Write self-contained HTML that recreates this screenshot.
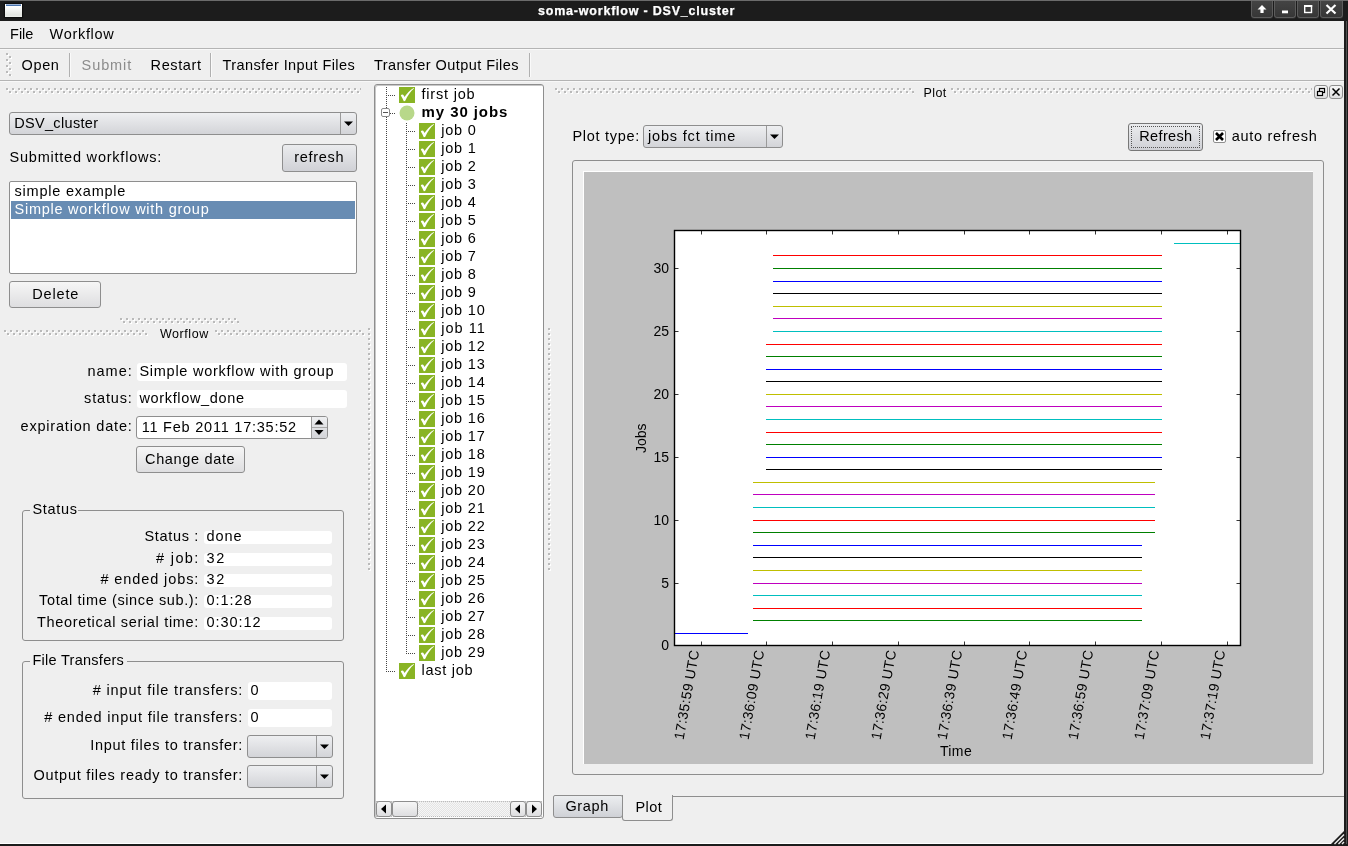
<!DOCTYPE html><html><head><meta charset="utf-8"><style>
html,body{margin:0;padding:0;}
body{width:1348px;height:846px;position:relative;overflow:hidden;background:#efefef;font-family:"Liberation Sans", sans-serif;}
.t{position:absolute;white-space:nowrap;font-family:"Liberation Sans", sans-serif;}
#txt{position:absolute;left:0;top:0;width:1348px;height:846px;will-change:transform;}
svg text{font-family:"Liberation Sans", sans-serif;}
</style></head><body>
<div id="txt"><div style="position:absolute;left:0px;top:0px;width:1348px;height:21px;box-sizing:border-box;background:#1c1c1c;"></div><div style="position:absolute;left:0px;top:0px;width:1348px;height:1px;box-sizing:border-box;background:#6b6b6b;"></div><div style="position:absolute;left:5px;top:4px;width:17px;height:13px;box-sizing:border-box;background:linear-gradient(#ffffff 20%,#e4e6e2 85%,#eef0ec);box-shadow:0 0 1px 1px rgba(0,0,0,0.5);"></div><div style="position:absolute;left:6px;top:4px;width:15px;height:1px;box-sizing:border-box;background:#9cb4d6;"></div><div style="position:absolute;left:6px;top:5px;width:15px;height:1px;box-sizing:border-box;background:#4c76b0;"></div><div class="t" style="left:538.00px;top:5.00px;font-size:12.5px;line-height:12.5px;letter-spacing:0.793px;color:#ffffff;font-weight:bold;-webkit-text-stroke:0.25px #fff;">soma-workflow - DSV_cluster</div><div style="position:absolute;left:1251px;top:1px;width:22px;height:17px;box-sizing:border-box;background:linear-gradient(#444,#363636);border:1px solid #5c5c5c;border-top:none;border-radius:0 0 3px 3px;box-shadow:0 1px 0 #2a2a2a;"></div><div style="position:absolute;left:1274px;top:1px;width:22px;height:17px;box-sizing:border-box;background:linear-gradient(#444,#363636);border:1px solid #5c5c5c;border-top:none;border-radius:0 0 3px 3px;box-shadow:0 1px 0 #2a2a2a;"></div><div style="position:absolute;left:1297px;top:1px;width:22px;height:17px;box-sizing:border-box;background:linear-gradient(#444,#363636);border:1px solid #5c5c5c;border-top:none;border-radius:0 0 3px 3px;box-shadow:0 1px 0 #2a2a2a;"></div><div style="position:absolute;left:1320px;top:1px;width:23px;height:17px;box-sizing:border-box;background:linear-gradient(#444,#363636);border:1px solid #5c5c5c;border-top:none;border-radius:0 0 3px 3px;box-shadow:0 1px 0 #2a2a2a;"></div><div style="position:absolute;left:1344px;top:21px;width:4px;height:825px;box-sizing:border-box;background:#1c1c1c;"></div><div style="position:absolute;left:0px;top:844px;width:1348px;height:2px;box-sizing:border-box;background:#1c1c1c;"></div><div style="position:absolute;left:0px;top:843px;width:1344px;height:1px;box-sizing:border-box;background:#ffffff;"></div><div style="position:absolute;left:1346px;top:21px;width:1px;height:823px;box-sizing:border-box;background:#505050;"></div><div class="t" style="left:10.00px;top:27.00px;font-size:14.5px;line-height:14.5px;letter-spacing:0.021px;color:#000;">File</div><div class="t" style="left:49.50px;top:27.00px;font-size:14.5px;line-height:14.5px;letter-spacing:0.705px;color:#000;">Workflow</div><div style="position:absolute;left:0px;top:48px;width:1344px;height:1px;box-sizing:border-box;background:#b4b4b4;"></div><div style="position:absolute;left:0px;top:49px;width:1344px;height:1px;box-sizing:border-box;background:#f8f8f8;"></div><div class="t" style="left:21.50px;top:58.00px;font-size:14.5px;line-height:14.5px;letter-spacing:0.642px;color:#000;">Open</div><div style="position:absolute;left:69px;top:53px;width:1px;height:24px;box-sizing:border-box;background:#b0b0b0;"></div><div style="position:absolute;left:70px;top:53px;width:1px;height:24px;box-sizing:border-box;background:#fafafa;"></div><div class="t" style="left:81.60px;top:58.00px;font-size:14.5px;line-height:14.5px;letter-spacing:0.907px;color:#8c8c8c;">Submit</div><div class="t" style="left:150.60px;top:58.00px;font-size:14.5px;line-height:14.5px;letter-spacing:0.598px;color:#000;">Restart</div><div style="position:absolute;left:210px;top:53px;width:1px;height:24px;box-sizing:border-box;background:#b0b0b0;"></div><div style="position:absolute;left:211px;top:53px;width:1px;height:24px;box-sizing:border-box;background:#fafafa;"></div><div class="t" style="left:222.50px;top:58.00px;font-size:14.5px;line-height:14.5px;letter-spacing:0.411px;color:#000;">Transfer Input Files</div><div class="t" style="left:374.00px;top:58.00px;font-size:14.5px;line-height:14.5px;letter-spacing:0.445px;color:#000;">Transfer Output Files</div><div style="position:absolute;left:529px;top:53px;width:1px;height:24px;box-sizing:border-box;background:#b0b0b0;"></div><div style="position:absolute;left:530px;top:53px;width:1px;height:24px;box-sizing:border-box;background:#fafafa;"></div><div style="position:absolute;left:0px;top:80px;width:1344px;height:1px;box-sizing:border-box;background:#b4b4b4;"></div><div style="position:absolute;left:0px;top:81px;width:1344px;height:1px;box-sizing:border-box;background:#f8f8f8;"></div><div style="position:absolute;left:9px;top:112px;width:348px;height:23px;box-sizing:border-box;border:1px solid #8e8e8e;border-radius:3px;background:linear-gradient(#eeeff1,#d3d4d8);"></div><div style="position:absolute;left:340px;top:113px;width:1px;height:21px;box-sizing:border-box;background:#9a9a9a;"></div><div class="t" style="left:14.20px;top:116.00px;font-size:14.5px;line-height:14.5px;letter-spacing:0.327px;color:#000;">DSV_cluster</div><div class="t" style="left:9.50px;top:150.00px;font-size:14.5px;line-height:14.5px;letter-spacing:0.781px;color:#000;">Submitted workflows:</div><div style="position:absolute;left:282px;top:144px;width:75px;height:28px;box-sizing:border-box;border:1px solid #8e8e8e;border-radius:3px;background:linear-gradient(#f6f6f6,#dedee0);background:linear-gradient(#ebecee,#d0d1d6);"></div><div class="t" style="left:294.30px;top:150.00px;font-size:14.5px;line-height:14.5px;letter-spacing:0.682px;color:#000;">refresh</div><div style="position:absolute;left:9px;top:181px;width:348px;height:93px;box-sizing:border-box;background:#fff;border:1px solid #8e8e8e;border-radius:2px;"></div><div style="position:absolute;left:11px;top:201px;width:344px;height:18px;box-sizing:border-box;background:#688cb3;"></div><div class="t" style="left:14.50px;top:184.00px;font-size:14.5px;line-height:14.5px;letter-spacing:0.784px;color:#000;">simple example</div><div class="t" style="left:14.50px;top:202.00px;font-size:14.5px;line-height:14.5px;letter-spacing:0.742px;color:#fff;">Simple workflow with group</div><div style="position:absolute;left:9px;top:281px;width:92px;height:27px;box-sizing:border-box;border:1px solid #8e8e8e;border-radius:3px;background:linear-gradient(#f6f6f6,#dedee0);"></div><div class="t" style="left:32.30px;top:287.00px;font-size:14.5px;line-height:14.5px;letter-spacing:0.818px;color:#000;">Delete</div><div class="t" style="left:160.00px;top:328.00px;font-size:12.5px;line-height:12.5px;letter-spacing:0.540px;color:#000;">Worflow</div><div class="t" style="left:87.42px;top:364.00px;font-size:14.5px;line-height:14.5px;letter-spacing:1.031px;color:#000;">name:</div><div style="position:absolute;left:137px;top:363px;width:210px;height:18px;box-sizing:border-box;background:#fff;border-radius:3px;"></div><div class="t" style="left:139.40px;top:364.00px;font-size:14.5px;line-height:14.5px;letter-spacing:0.742px;color:#000;">Simple workflow with group</div><div class="t" style="left:84.06px;top:391.00px;font-size:14.5px;line-height:14.5px;letter-spacing:0.837px;color:#000;">status:</div><div style="position:absolute;left:137px;top:390px;width:210px;height:18px;box-sizing:border-box;background:#fff;border-radius:3px;"></div><div class="t" style="left:139.40px;top:391.00px;font-size:14.5px;line-height:14.5px;letter-spacing:0.661px;color:#000;">workflow_done</div><div class="t" style="left:20.50px;top:419.00px;font-size:14.5px;line-height:14.5px;letter-spacing:0.812px;color:#000;">expiration date:</div><div style="position:absolute;left:136px;top:416px;width:192px;height:23px;box-sizing:border-box;background:#fff;border:1px solid #8e8e8e;border-radius:3px;"></div><div style="position:absolute;left:311px;top:417px;width:16px;height:21px;box-sizing:border-box;background:linear-gradient(#eeeff1,#d3d4d8);border-left:1px solid #9a9a9a;border-radius:0 2px 2px 0;"></div><div style="position:absolute;left:312px;top:427px;width:15px;height:1px;box-sizing:border-box;background:#a8a8a8;"></div><div class="t" style="left:141.70px;top:420.00px;font-size:14.5px;line-height:14.5px;letter-spacing:0.775px;color:#000;">11 Feb 2011 17:35:52</div><div style="position:absolute;left:136px;top:446px;width:109px;height:27px;box-sizing:border-box;border:1px solid #8e8e8e;border-radius:3px;background:linear-gradient(#f6f6f6,#dedee0);"></div><div class="t" style="left:145.00px;top:452.00px;font-size:14.5px;line-height:14.5px;letter-spacing:0.659px;color:#000;">Change date</div><div style="position:absolute;left:22px;top:510px;width:322px;height:131px;box-sizing:border-box;border:1px solid #8e8e8e;border-radius:3px;"></div><div style="position:absolute;left:30px;top:504px;width:48px;height:10px;box-sizing:border-box;background:#efefef;"></div><div class="t" style="left:32.40px;top:502.00px;font-size:14.5px;line-height:14.5px;letter-spacing:0.701px;color:#000;">Status</div><div class="t" style="left:144.54px;top:529.00px;font-size:14.5px;line-height:14.5px;letter-spacing:0.659px;color:#000;">Status :</div><div style="position:absolute;left:204px;top:531px;width:128px;height:13px;box-sizing:border-box;background:#fff;border-radius:3px;"></div><div class="t" style="left:206.50px;top:529.00px;font-size:14.5px;line-height:14.5px;letter-spacing:0.896px;color:#000;">done</div><div class="t" style="left:156.02px;top:551.00px;font-size:14.5px;line-height:14.5px;letter-spacing:1.354px;color:#000;"># job:</div><div style="position:absolute;left:204px;top:553px;width:128px;height:13px;box-sizing:border-box;background:#fff;border-radius:3px;"></div><div class="t" style="left:206.50px;top:551.00px;font-size:14.5px;line-height:14.5px;letter-spacing:1.688px;color:#000;">32</div><div class="t" style="left:100.44px;top:572.00px;font-size:14.5px;line-height:14.5px;letter-spacing:0.900px;color:#000;"># ended jobs:</div><div style="position:absolute;left:204px;top:574px;width:128px;height:13px;box-sizing:border-box;background:#fff;border-radius:3px;"></div><div class="t" style="left:206.50px;top:572.00px;font-size:14.5px;line-height:14.5px;letter-spacing:1.688px;color:#000;">32</div><div class="t" style="left:39.12px;top:593.00px;font-size:14.5px;line-height:14.5px;letter-spacing:0.615px;color:#000;">Total time (since sub.):</div><div style="position:absolute;left:204px;top:595px;width:128px;height:13px;box-sizing:border-box;background:#fff;border-radius:3px;"></div><div class="t" style="left:206.50px;top:593.00px;font-size:14.5px;line-height:14.5px;letter-spacing:0.950px;color:#000;">0:1:28</div><div class="t" style="left:36.88px;top:615.00px;font-size:14.5px;line-height:14.5px;letter-spacing:0.679px;color:#000;">Theoretical serial time:</div><div style="position:absolute;left:204px;top:617px;width:128px;height:13px;box-sizing:border-box;background:#fff;border-radius:3px;"></div><div class="t" style="left:206.50px;top:615.00px;font-size:14.5px;line-height:14.5px;letter-spacing:0.933px;color:#000;">0:30:12</div><div style="position:absolute;left:22px;top:661px;width:322px;height:138px;box-sizing:border-box;border:1px solid #8e8e8e;border-radius:3px;"></div><div style="position:absolute;left:30px;top:655px;width:97px;height:10px;box-sizing:border-box;background:#efefef;"></div><div class="t" style="left:32.40px;top:653.00px;font-size:14.5px;line-height:14.5px;letter-spacing:0.280px;color:#000;">File Transfers</div><div class="t" style="left:92.64px;top:683.00px;font-size:14.5px;line-height:14.5px;letter-spacing:0.871px;color:#000;"># input file transfers:</div><div style="position:absolute;left:248px;top:682px;width:84px;height:18px;box-sizing:border-box;background:#fff;border-radius:3px;"></div><div class="t" style="left:250.50px;top:683.00px;font-size:14.5px;line-height:14.5px;letter-spacing:0.844px;color:#000;">0</div><div class="t" style="left:44.20px;top:710.00px;font-size:14.5px;line-height:14.5px;letter-spacing:0.826px;color:#000;"># ended input file transfers:</div><div style="position:absolute;left:248px;top:709px;width:84px;height:18px;box-sizing:border-box;background:#fff;border-radius:3px;"></div><div class="t" style="left:250.50px;top:710.00px;font-size:14.5px;line-height:14.5px;letter-spacing:0.844px;color:#000;">0</div><div class="t" style="left:90.26px;top:738.00px;font-size:14.5px;line-height:14.5px;letter-spacing:0.723px;color:#000;">Input files to transfer:</div><div style="position:absolute;left:247px;top:735px;width:86px;height:23px;box-sizing:border-box;border:1px solid #8e8e8e;border-radius:3px;background:linear-gradient(#eeeff1,#d3d4d8);"></div><div style="position:absolute;left:316px;top:736px;width:1px;height:21px;box-sizing:border-box;background:#9a9a9a;"></div><div class="t" style="left:33.56px;top:768.00px;font-size:14.5px;line-height:14.5px;letter-spacing:0.724px;color:#000;">Output files ready to transfer:</div><div style="position:absolute;left:247px;top:765px;width:86px;height:23px;box-sizing:border-box;border:1px solid #8e8e8e;border-radius:3px;background:linear-gradient(#eeeff1,#d3d4d8);"></div><div style="position:absolute;left:316px;top:766px;width:1px;height:21px;box-sizing:border-box;background:#9a9a9a;"></div><div style="position:absolute;left:374px;top:84px;width:170px;height:735px;box-sizing:border-box;background:#fff;border:1px solid #8e8e8e;border-radius:3px;box-shadow:inset 1px 1px 0 #c8c8c8;"></div><div style="position:absolute;left:376px;top:801px;width:166px;height:16px;box-sizing:border-box;background:repeating-conic-gradient(#e4e4e4 0 25%,#f6f6f6 0 50%) 0 0/2px 2px;border-top:1px dotted #bbb;border-bottom:1px dotted #bbb;"></div><div style="position:absolute;left:376px;top:801px;width:16px;height:16px;box-sizing:border-box;border:1px solid #8e8e8e;border-radius:3px;background:linear-gradient(#f6f6f6,#dedee0);"></div><div style="position:absolute;left:392px;top:801px;width:26px;height:16px;box-sizing:border-box;border:1px solid #8e8e8e;border-radius:3px;background:linear-gradient(#f6f6f6,#dedee0);"></div><div style="position:absolute;left:510px;top:801px;width:16px;height:16px;box-sizing:border-box;border:1px solid #8e8e8e;border-radius:3px;background:linear-gradient(#f6f6f6,#dedee0);"></div><div style="position:absolute;left:526px;top:801px;width:16px;height:16px;box-sizing:border-box;border:1px solid #8e8e8e;border-radius:3px;background:linear-gradient(#f6f6f6,#dedee0);"></div><div class="t" style="left:421.50px;top:87.00px;font-size:14.5px;line-height:14.5px;letter-spacing:0.802px;color:#000;">first job</div><div class="t" style="left:421.60px;top:104.00px;font-size:15px;line-height:15px;letter-spacing:0.910px;color:#000;font-weight:bold;">my 30 jobs</div><div class="t" style="left:441.20px;top:123.00px;font-size:14.5px;line-height:14.5px;letter-spacing:0.815px;color:#000;">job 0</div><div class="t" style="left:441.20px;top:141.00px;font-size:14.5px;line-height:14.5px;letter-spacing:0.815px;color:#000;">job 1</div><div class="t" style="left:441.20px;top:159.00px;font-size:14.5px;line-height:14.5px;letter-spacing:0.815px;color:#000;">job 2</div><div class="t" style="left:441.20px;top:177.00px;font-size:14.5px;line-height:14.5px;letter-spacing:0.815px;color:#000;">job 3</div><div class="t" style="left:441.20px;top:195.00px;font-size:14.5px;line-height:14.5px;letter-spacing:0.815px;color:#000;">job 4</div><div class="t" style="left:441.20px;top:213.00px;font-size:14.5px;line-height:14.5px;letter-spacing:0.815px;color:#000;">job 5</div><div class="t" style="left:441.20px;top:231.00px;font-size:14.5px;line-height:14.5px;letter-spacing:0.815px;color:#000;">job 6</div><div class="t" style="left:441.20px;top:249.00px;font-size:14.5px;line-height:14.5px;letter-spacing:0.815px;color:#000;">job 7</div><div class="t" style="left:441.20px;top:267.00px;font-size:14.5px;line-height:14.5px;letter-spacing:0.815px;color:#000;">job 8</div><div class="t" style="left:441.20px;top:285.00px;font-size:14.5px;line-height:14.5px;letter-spacing:0.815px;color:#000;">job 9</div><div class="t" style="left:441.20px;top:303.00px;font-size:14.5px;line-height:14.5px;letter-spacing:0.821px;color:#000;">job 10</div><div class="t" style="left:441.20px;top:321.00px;font-size:14.5px;line-height:14.5px;letter-spacing:1.036px;color:#000;">job 11</div><div class="t" style="left:441.20px;top:339.00px;font-size:14.5px;line-height:14.5px;letter-spacing:0.821px;color:#000;">job 12</div><div class="t" style="left:441.20px;top:357.00px;font-size:14.5px;line-height:14.5px;letter-spacing:0.821px;color:#000;">job 13</div><div class="t" style="left:441.20px;top:375.00px;font-size:14.5px;line-height:14.5px;letter-spacing:0.821px;color:#000;">job 14</div><div class="t" style="left:441.20px;top:393.00px;font-size:14.5px;line-height:14.5px;letter-spacing:0.821px;color:#000;">job 15</div><div class="t" style="left:441.20px;top:411.00px;font-size:14.5px;line-height:14.5px;letter-spacing:0.821px;color:#000;">job 16</div><div class="t" style="left:441.20px;top:429.00px;font-size:14.5px;line-height:14.5px;letter-spacing:0.821px;color:#000;">job 17</div><div class="t" style="left:441.20px;top:447.00px;font-size:14.5px;line-height:14.5px;letter-spacing:0.821px;color:#000;">job 18</div><div class="t" style="left:441.20px;top:465.00px;font-size:14.5px;line-height:14.5px;letter-spacing:0.821px;color:#000;">job 19</div><div class="t" style="left:441.20px;top:483.00px;font-size:14.5px;line-height:14.5px;letter-spacing:0.821px;color:#000;">job 20</div><div class="t" style="left:441.20px;top:501.00px;font-size:14.5px;line-height:14.5px;letter-spacing:0.821px;color:#000;">job 21</div><div class="t" style="left:441.20px;top:519.00px;font-size:14.5px;line-height:14.5px;letter-spacing:0.821px;color:#000;">job 22</div><div class="t" style="left:441.20px;top:537.00px;font-size:14.5px;line-height:14.5px;letter-spacing:0.821px;color:#000;">job 23</div><div class="t" style="left:441.20px;top:555.00px;font-size:14.5px;line-height:14.5px;letter-spacing:0.821px;color:#000;">job 24</div><div class="t" style="left:441.20px;top:573.00px;font-size:14.5px;line-height:14.5px;letter-spacing:0.821px;color:#000;">job 25</div><div class="t" style="left:441.20px;top:591.00px;font-size:14.5px;line-height:14.5px;letter-spacing:0.821px;color:#000;">job 26</div><div class="t" style="left:441.20px;top:609.00px;font-size:14.5px;line-height:14.5px;letter-spacing:0.821px;color:#000;">job 27</div><div class="t" style="left:441.20px;top:627.00px;font-size:14.5px;line-height:14.5px;letter-spacing:0.821px;color:#000;">job 28</div><div class="t" style="left:441.20px;top:645.00px;font-size:14.5px;line-height:14.5px;letter-spacing:0.821px;color:#000;">job 29</div><div class="t" style="left:421.50px;top:663.00px;font-size:14.5px;line-height:14.5px;letter-spacing:0.729px;color:#000;">last job</div><div class="t" style="left:923.60px;top:87.00px;font-size:12.5px;line-height:12.5px;letter-spacing:0.359px;color:#000;">Plot</div><div style="position:absolute;left:1314px;top:85px;width:14px;height:14px;box-sizing:border-box;border:1px solid #8e8e8e;border-radius:3px;background:linear-gradient(#f6f6f6,#dedee0);"></div><div style="position:absolute;left:1329px;top:85px;width:14px;height:14px;box-sizing:border-box;border:1px solid #8e8e8e;border-radius:3px;background:linear-gradient(#f6f6f6,#dedee0);"></div><div class="t" style="left:572.40px;top:129.00px;font-size:14.5px;line-height:14.5px;letter-spacing:0.709px;color:#000;">Plot type:</div><div style="position:absolute;left:643px;top:125px;width:140px;height:23px;box-sizing:border-box;border:1px solid #8e8e8e;border-radius:3px;background:linear-gradient(#eeeff1,#d3d4d8);"></div><div style="position:absolute;left:766px;top:126px;width:1px;height:21px;box-sizing:border-box;background:#9a9a9a;"></div><div class="t" style="left:648.00px;top:129.00px;font-size:14.5px;line-height:14.5px;letter-spacing:0.827px;color:#000;">jobs fct time</div><div style="position:absolute;left:1128px;top:123px;width:75px;height:28px;box-sizing:border-box;border:1px solid #8e8e8e;border-radius:3px;background:linear-gradient(#f6f6f6,#dedee0);border-color:#777;background:linear-gradient(#ebecee,#d0d1d6);"></div><div style="position:absolute;left:1131px;top:126px;width:69px;height:22px;box-sizing:border-box;border:1px dotted #555;"></div><div class="t" style="left:1139.30px;top:129.00px;font-size:14.5px;line-height:14.5px;letter-spacing:0.350px;color:#000;">Refresh</div><div style="position:absolute;left:1213px;top:130px;width:13px;height:13px;box-sizing:border-box;background:#fff;border:1px solid #8e8e8e;border-radius:2px;"></div><div class="t" style="left:1231.70px;top:129.00px;font-size:14.5px;line-height:14.5px;letter-spacing:0.709px;color:#000;">auto refresh</div><div style="position:absolute;left:572px;top:160px;width:752px;height:615px;box-sizing:border-box;border:1px solid #8e8e8e;border-radius:3px;"></div><div style="position:absolute;left:583px;top:171px;width:730px;height:593px;box-sizing:border-box;background:#bfbfbf;border-top:1px solid #fff;border-left:1px solid #fff;"></div><div style="position:absolute;left:672px;top:796px;width:672px;height:1px;box-sizing:border-box;background:#8e8e8e;"></div><div style="position:absolute;left:553px;top:795px;width:70px;height:23px;box-sizing:border-box;border:1px solid #8e8e8e;border-radius:2px 2px 3px 3px;background:linear-gradient(#eceef0,#cfd1d6);"></div><div style="position:absolute;left:622px;top:795px;width:51px;height:26px;box-sizing:border-box;border:1px solid #8e8e8e;border-top:none;border-radius:0 0 3px 3px;background:#efefef;"></div><div class="t" style="left:565.40px;top:799.00px;font-size:14.5px;line-height:14.5px;letter-spacing:0.662px;color:#000;">Graph</div><div class="t" style="left:635.40px;top:800.00px;font-size:14.5px;line-height:14.5px;letter-spacing:0.467px;color:#000;">Plot</div></div>
<svg style="position:absolute;left:0;top:0;will-change:transform" width="1348" height="846" viewBox="0 0 1348 846">
<defs>
<pattern id="pdh" x="0" y="0" width="6" height="6" patternUnits="userSpaceOnUse">
<rect x="0" y="0" width="2" height="2" fill="#bababa"/><rect x="2" y="1" width="1" height="2" fill="#fff"/><rect x="1" y="2" width="1" height="1" fill="#fff"/>
<rect x="3" y="3" width="2" height="2" fill="#bababa"/><rect x="5" y="4" width="1" height="2" fill="#fff"/><rect x="4" y="5" width="1" height="1" fill="#fff"/>
</pattern>
<pattern id="pdv1" x="0" y="0" width="3" height="5" patternUnits="userSpaceOnUse"><rect x="0" y="0" width="2" height="2" fill="#bababa"/><rect x="2" y="1" width="1" height="2" fill="#fff"/><rect x="1" y="2" width="1" height="1" fill="#fff"/></pattern>
<pattern id="pdv" x="0" y="0" width="6" height="6" patternUnits="userSpaceOnUse">
<rect x="0" y="0" width="2" height="2" fill="#bababa"/><rect x="2" y="1" width="1" height="2" fill="#fff"/><rect x="1" y="2" width="1" height="1" fill="#fff"/>
<rect x="3" y="3" width="2" height="2" fill="#bababa"/><rect x="5" y="4" width="1" height="2" fill="#fff"/><rect x="4" y="5" width="1" height="1" fill="#fff"/>
</pattern>
</defs>
<path d="M1262 5 L1266.5 9.5 L1263.6 9.5 L1263.6 13 L1260.4 13 L1260.4 9.5 L1257.5 9.5 Z" fill="#fff"/><rect x="1282" y="10.5" width="6" height="2.8" fill="#fff"/><rect x="1304.7" y="5.7" width="6.8" height="6.8" fill="none" stroke="#fff" stroke-width="1.4"/><rect x="1304" y="5" width="8.2" height="2" fill="#fff"/><path d="M1326.5 5 L1335.5 13.5 M1335.5 5 L1326.5 13.5" stroke="#fff" stroke-width="2.2"/><path d="M1331 844 L1344 831 L1344 844 Z" fill="#1c1c1c"/><path d="M1334.5 844 L1344 834.5 M1338.5 844 L1344 838.5 M1342 844 L1344 842" stroke="#efefef" stroke-width="1.4"/><g transform="translate(6,53)"><rect x="0" y="0" width="6" height="23" fill="url(#pdv)"/></g><g transform="translate(6,88)"><rect x="0" y="0" width="355" height="6" fill="url(#pdh)"/></g><path d="M344.0 121.5 L353.0 121.5 L348.5 126.0 Z" fill="#000"/><g transform="translate(120,318)"><rect x="0" y="0" width="119" height="6" fill="url(#pdh)"/></g><g transform="translate(4,330)"><rect x="0" y="0" width="144" height="6" fill="url(#pdh)"/></g><g transform="translate(215,330)"><rect x="0" y="0" width="150" height="6" fill="url(#pdh)"/></g><g transform="translate(548,328)"><rect x="0" y="0" width="3" height="244" fill="url(#pdv1)"/></g><g transform="translate(368,328)"><rect x="0" y="0" width="3" height="244" fill="url(#pdv1)"/></g><path d="M314.5 424.5 L323.5 424.5 L319 419.5 Z" fill="#000"/><path d="M314.5 430 L323.5 430 L319 435 Z" fill="#000"/><path d="M320.0 744.5 L329.0 744.5 L324.5 749.0 Z" fill="#000"/><path d="M320.0 774.5 L329.0 774.5 L324.5 779.0 Z" fill="#000"/><path d="M381 809 L386 804.5 L386 813.5 Z" fill="#000"/><path d="M515 809 L520 804.5 L520 813.5 Z" fill="#000"/><path d="M537 809 L532 804.5 L532 813.5 Z" fill="#000"/><path d="M386.5 87 V108 M386.5 117 V672" stroke="#444" stroke-width="1" stroke-dasharray="1 1"/><path d="M388 95.5 H395 M390 113.5 H395 M388 671.5 H395" stroke="#444" stroke-width="1" stroke-dasharray="1 1"/><path d="M406.5 123 V654" stroke="#444" stroke-width="1" stroke-dasharray="1 1"/><g transform="translate(399,87)"><rect x="0" y="0" width="16" height="16" fill="#89b424"/><path d="M1.8 8.4 C2.6 7.2 4.2 7.3 4.9 8.7 L5.5 10.0 C7.9 6.3 10.9 3.0 14.7 0.9 L15.0 1.5 C11.6 4.4 8.8 8.3 6.1 14.0 L4.8 14.2 C4.0 12.0 2.9 10.0 1.8 8.4 Z" fill="#fff"/></g><rect x="381.5" y="108.5" width="8" height="8" fill="#fff" stroke="#8a8a8a" stroke-width="1" rx="1.5"/><path d="M383 112.5 H388" stroke="#555" stroke-width="1"/><circle cx="407" cy="113" r="7.5" fill="#b8d88a"/><path d="M408 131.5 H415" stroke="#444" stroke-width="1" stroke-dasharray="1 1"/><g transform="translate(419,123)"><rect x="0" y="0" width="16" height="16" fill="#89b424"/><path d="M1.8 8.4 C2.6 7.2 4.2 7.3 4.9 8.7 L5.5 10.0 C7.9 6.3 10.9 3.0 14.7 0.9 L15.0 1.5 C11.6 4.4 8.8 8.3 6.1 14.0 L4.8 14.2 C4.0 12.0 2.9 10.0 1.8 8.4 Z" fill="#fff"/></g><path d="M408 149.5 H415" stroke="#444" stroke-width="1" stroke-dasharray="1 1"/><g transform="translate(419,141)"><rect x="0" y="0" width="16" height="16" fill="#89b424"/><path d="M1.8 8.4 C2.6 7.2 4.2 7.3 4.9 8.7 L5.5 10.0 C7.9 6.3 10.9 3.0 14.7 0.9 L15.0 1.5 C11.6 4.4 8.8 8.3 6.1 14.0 L4.8 14.2 C4.0 12.0 2.9 10.0 1.8 8.4 Z" fill="#fff"/></g><path d="M408 167.5 H415" stroke="#444" stroke-width="1" stroke-dasharray="1 1"/><g transform="translate(419,159)"><rect x="0" y="0" width="16" height="16" fill="#89b424"/><path d="M1.8 8.4 C2.6 7.2 4.2 7.3 4.9 8.7 L5.5 10.0 C7.9 6.3 10.9 3.0 14.7 0.9 L15.0 1.5 C11.6 4.4 8.8 8.3 6.1 14.0 L4.8 14.2 C4.0 12.0 2.9 10.0 1.8 8.4 Z" fill="#fff"/></g><path d="M408 185.5 H415" stroke="#444" stroke-width="1" stroke-dasharray="1 1"/><g transform="translate(419,177)"><rect x="0" y="0" width="16" height="16" fill="#89b424"/><path d="M1.8 8.4 C2.6 7.2 4.2 7.3 4.9 8.7 L5.5 10.0 C7.9 6.3 10.9 3.0 14.7 0.9 L15.0 1.5 C11.6 4.4 8.8 8.3 6.1 14.0 L4.8 14.2 C4.0 12.0 2.9 10.0 1.8 8.4 Z" fill="#fff"/></g><path d="M408 203.5 H415" stroke="#444" stroke-width="1" stroke-dasharray="1 1"/><g transform="translate(419,195)"><rect x="0" y="0" width="16" height="16" fill="#89b424"/><path d="M1.8 8.4 C2.6 7.2 4.2 7.3 4.9 8.7 L5.5 10.0 C7.9 6.3 10.9 3.0 14.7 0.9 L15.0 1.5 C11.6 4.4 8.8 8.3 6.1 14.0 L4.8 14.2 C4.0 12.0 2.9 10.0 1.8 8.4 Z" fill="#fff"/></g><path d="M408 221.5 H415" stroke="#444" stroke-width="1" stroke-dasharray="1 1"/><g transform="translate(419,213)"><rect x="0" y="0" width="16" height="16" fill="#89b424"/><path d="M1.8 8.4 C2.6 7.2 4.2 7.3 4.9 8.7 L5.5 10.0 C7.9 6.3 10.9 3.0 14.7 0.9 L15.0 1.5 C11.6 4.4 8.8 8.3 6.1 14.0 L4.8 14.2 C4.0 12.0 2.9 10.0 1.8 8.4 Z" fill="#fff"/></g><path d="M408 239.5 H415" stroke="#444" stroke-width="1" stroke-dasharray="1 1"/><g transform="translate(419,231)"><rect x="0" y="0" width="16" height="16" fill="#89b424"/><path d="M1.8 8.4 C2.6 7.2 4.2 7.3 4.9 8.7 L5.5 10.0 C7.9 6.3 10.9 3.0 14.7 0.9 L15.0 1.5 C11.6 4.4 8.8 8.3 6.1 14.0 L4.8 14.2 C4.0 12.0 2.9 10.0 1.8 8.4 Z" fill="#fff"/></g><path d="M408 257.5 H415" stroke="#444" stroke-width="1" stroke-dasharray="1 1"/><g transform="translate(419,249)"><rect x="0" y="0" width="16" height="16" fill="#89b424"/><path d="M1.8 8.4 C2.6 7.2 4.2 7.3 4.9 8.7 L5.5 10.0 C7.9 6.3 10.9 3.0 14.7 0.9 L15.0 1.5 C11.6 4.4 8.8 8.3 6.1 14.0 L4.8 14.2 C4.0 12.0 2.9 10.0 1.8 8.4 Z" fill="#fff"/></g><path d="M408 275.5 H415" stroke="#444" stroke-width="1" stroke-dasharray="1 1"/><g transform="translate(419,267)"><rect x="0" y="0" width="16" height="16" fill="#89b424"/><path d="M1.8 8.4 C2.6 7.2 4.2 7.3 4.9 8.7 L5.5 10.0 C7.9 6.3 10.9 3.0 14.7 0.9 L15.0 1.5 C11.6 4.4 8.8 8.3 6.1 14.0 L4.8 14.2 C4.0 12.0 2.9 10.0 1.8 8.4 Z" fill="#fff"/></g><path d="M408 293.5 H415" stroke="#444" stroke-width="1" stroke-dasharray="1 1"/><g transform="translate(419,285)"><rect x="0" y="0" width="16" height="16" fill="#89b424"/><path d="M1.8 8.4 C2.6 7.2 4.2 7.3 4.9 8.7 L5.5 10.0 C7.9 6.3 10.9 3.0 14.7 0.9 L15.0 1.5 C11.6 4.4 8.8 8.3 6.1 14.0 L4.8 14.2 C4.0 12.0 2.9 10.0 1.8 8.4 Z" fill="#fff"/></g><path d="M408 311.5 H415" stroke="#444" stroke-width="1" stroke-dasharray="1 1"/><g transform="translate(419,303)"><rect x="0" y="0" width="16" height="16" fill="#89b424"/><path d="M1.8 8.4 C2.6 7.2 4.2 7.3 4.9 8.7 L5.5 10.0 C7.9 6.3 10.9 3.0 14.7 0.9 L15.0 1.5 C11.6 4.4 8.8 8.3 6.1 14.0 L4.8 14.2 C4.0 12.0 2.9 10.0 1.8 8.4 Z" fill="#fff"/></g><path d="M408 329.5 H415" stroke="#444" stroke-width="1" stroke-dasharray="1 1"/><g transform="translate(419,321)"><rect x="0" y="0" width="16" height="16" fill="#89b424"/><path d="M1.8 8.4 C2.6 7.2 4.2 7.3 4.9 8.7 L5.5 10.0 C7.9 6.3 10.9 3.0 14.7 0.9 L15.0 1.5 C11.6 4.4 8.8 8.3 6.1 14.0 L4.8 14.2 C4.0 12.0 2.9 10.0 1.8 8.4 Z" fill="#fff"/></g><path d="M408 347.5 H415" stroke="#444" stroke-width="1" stroke-dasharray="1 1"/><g transform="translate(419,339)"><rect x="0" y="0" width="16" height="16" fill="#89b424"/><path d="M1.8 8.4 C2.6 7.2 4.2 7.3 4.9 8.7 L5.5 10.0 C7.9 6.3 10.9 3.0 14.7 0.9 L15.0 1.5 C11.6 4.4 8.8 8.3 6.1 14.0 L4.8 14.2 C4.0 12.0 2.9 10.0 1.8 8.4 Z" fill="#fff"/></g><path d="M408 365.5 H415" stroke="#444" stroke-width="1" stroke-dasharray="1 1"/><g transform="translate(419,357)"><rect x="0" y="0" width="16" height="16" fill="#89b424"/><path d="M1.8 8.4 C2.6 7.2 4.2 7.3 4.9 8.7 L5.5 10.0 C7.9 6.3 10.9 3.0 14.7 0.9 L15.0 1.5 C11.6 4.4 8.8 8.3 6.1 14.0 L4.8 14.2 C4.0 12.0 2.9 10.0 1.8 8.4 Z" fill="#fff"/></g><path d="M408 383.5 H415" stroke="#444" stroke-width="1" stroke-dasharray="1 1"/><g transform="translate(419,375)"><rect x="0" y="0" width="16" height="16" fill="#89b424"/><path d="M1.8 8.4 C2.6 7.2 4.2 7.3 4.9 8.7 L5.5 10.0 C7.9 6.3 10.9 3.0 14.7 0.9 L15.0 1.5 C11.6 4.4 8.8 8.3 6.1 14.0 L4.8 14.2 C4.0 12.0 2.9 10.0 1.8 8.4 Z" fill="#fff"/></g><path d="M408 401.5 H415" stroke="#444" stroke-width="1" stroke-dasharray="1 1"/><g transform="translate(419,393)"><rect x="0" y="0" width="16" height="16" fill="#89b424"/><path d="M1.8 8.4 C2.6 7.2 4.2 7.3 4.9 8.7 L5.5 10.0 C7.9 6.3 10.9 3.0 14.7 0.9 L15.0 1.5 C11.6 4.4 8.8 8.3 6.1 14.0 L4.8 14.2 C4.0 12.0 2.9 10.0 1.8 8.4 Z" fill="#fff"/></g><path d="M408 419.5 H415" stroke="#444" stroke-width="1" stroke-dasharray="1 1"/><g transform="translate(419,411)"><rect x="0" y="0" width="16" height="16" fill="#89b424"/><path d="M1.8 8.4 C2.6 7.2 4.2 7.3 4.9 8.7 L5.5 10.0 C7.9 6.3 10.9 3.0 14.7 0.9 L15.0 1.5 C11.6 4.4 8.8 8.3 6.1 14.0 L4.8 14.2 C4.0 12.0 2.9 10.0 1.8 8.4 Z" fill="#fff"/></g><path d="M408 437.5 H415" stroke="#444" stroke-width="1" stroke-dasharray="1 1"/><g transform="translate(419,429)"><rect x="0" y="0" width="16" height="16" fill="#89b424"/><path d="M1.8 8.4 C2.6 7.2 4.2 7.3 4.9 8.7 L5.5 10.0 C7.9 6.3 10.9 3.0 14.7 0.9 L15.0 1.5 C11.6 4.4 8.8 8.3 6.1 14.0 L4.8 14.2 C4.0 12.0 2.9 10.0 1.8 8.4 Z" fill="#fff"/></g><path d="M408 455.5 H415" stroke="#444" stroke-width="1" stroke-dasharray="1 1"/><g transform="translate(419,447)"><rect x="0" y="0" width="16" height="16" fill="#89b424"/><path d="M1.8 8.4 C2.6 7.2 4.2 7.3 4.9 8.7 L5.5 10.0 C7.9 6.3 10.9 3.0 14.7 0.9 L15.0 1.5 C11.6 4.4 8.8 8.3 6.1 14.0 L4.8 14.2 C4.0 12.0 2.9 10.0 1.8 8.4 Z" fill="#fff"/></g><path d="M408 473.5 H415" stroke="#444" stroke-width="1" stroke-dasharray="1 1"/><g transform="translate(419,465)"><rect x="0" y="0" width="16" height="16" fill="#89b424"/><path d="M1.8 8.4 C2.6 7.2 4.2 7.3 4.9 8.7 L5.5 10.0 C7.9 6.3 10.9 3.0 14.7 0.9 L15.0 1.5 C11.6 4.4 8.8 8.3 6.1 14.0 L4.8 14.2 C4.0 12.0 2.9 10.0 1.8 8.4 Z" fill="#fff"/></g><path d="M408 491.5 H415" stroke="#444" stroke-width="1" stroke-dasharray="1 1"/><g transform="translate(419,483)"><rect x="0" y="0" width="16" height="16" fill="#89b424"/><path d="M1.8 8.4 C2.6 7.2 4.2 7.3 4.9 8.7 L5.5 10.0 C7.9 6.3 10.9 3.0 14.7 0.9 L15.0 1.5 C11.6 4.4 8.8 8.3 6.1 14.0 L4.8 14.2 C4.0 12.0 2.9 10.0 1.8 8.4 Z" fill="#fff"/></g><path d="M408 509.5 H415" stroke="#444" stroke-width="1" stroke-dasharray="1 1"/><g transform="translate(419,501)"><rect x="0" y="0" width="16" height="16" fill="#89b424"/><path d="M1.8 8.4 C2.6 7.2 4.2 7.3 4.9 8.7 L5.5 10.0 C7.9 6.3 10.9 3.0 14.7 0.9 L15.0 1.5 C11.6 4.4 8.8 8.3 6.1 14.0 L4.8 14.2 C4.0 12.0 2.9 10.0 1.8 8.4 Z" fill="#fff"/></g><path d="M408 527.5 H415" stroke="#444" stroke-width="1" stroke-dasharray="1 1"/><g transform="translate(419,519)"><rect x="0" y="0" width="16" height="16" fill="#89b424"/><path d="M1.8 8.4 C2.6 7.2 4.2 7.3 4.9 8.7 L5.5 10.0 C7.9 6.3 10.9 3.0 14.7 0.9 L15.0 1.5 C11.6 4.4 8.8 8.3 6.1 14.0 L4.8 14.2 C4.0 12.0 2.9 10.0 1.8 8.4 Z" fill="#fff"/></g><path d="M408 545.5 H415" stroke="#444" stroke-width="1" stroke-dasharray="1 1"/><g transform="translate(419,537)"><rect x="0" y="0" width="16" height="16" fill="#89b424"/><path d="M1.8 8.4 C2.6 7.2 4.2 7.3 4.9 8.7 L5.5 10.0 C7.9 6.3 10.9 3.0 14.7 0.9 L15.0 1.5 C11.6 4.4 8.8 8.3 6.1 14.0 L4.8 14.2 C4.0 12.0 2.9 10.0 1.8 8.4 Z" fill="#fff"/></g><path d="M408 563.5 H415" stroke="#444" stroke-width="1" stroke-dasharray="1 1"/><g transform="translate(419,555)"><rect x="0" y="0" width="16" height="16" fill="#89b424"/><path d="M1.8 8.4 C2.6 7.2 4.2 7.3 4.9 8.7 L5.5 10.0 C7.9 6.3 10.9 3.0 14.7 0.9 L15.0 1.5 C11.6 4.4 8.8 8.3 6.1 14.0 L4.8 14.2 C4.0 12.0 2.9 10.0 1.8 8.4 Z" fill="#fff"/></g><path d="M408 581.5 H415" stroke="#444" stroke-width="1" stroke-dasharray="1 1"/><g transform="translate(419,573)"><rect x="0" y="0" width="16" height="16" fill="#89b424"/><path d="M1.8 8.4 C2.6 7.2 4.2 7.3 4.9 8.7 L5.5 10.0 C7.9 6.3 10.9 3.0 14.7 0.9 L15.0 1.5 C11.6 4.4 8.8 8.3 6.1 14.0 L4.8 14.2 C4.0 12.0 2.9 10.0 1.8 8.4 Z" fill="#fff"/></g><path d="M408 599.5 H415" stroke="#444" stroke-width="1" stroke-dasharray="1 1"/><g transform="translate(419,591)"><rect x="0" y="0" width="16" height="16" fill="#89b424"/><path d="M1.8 8.4 C2.6 7.2 4.2 7.3 4.9 8.7 L5.5 10.0 C7.9 6.3 10.9 3.0 14.7 0.9 L15.0 1.5 C11.6 4.4 8.8 8.3 6.1 14.0 L4.8 14.2 C4.0 12.0 2.9 10.0 1.8 8.4 Z" fill="#fff"/></g><path d="M408 617.5 H415" stroke="#444" stroke-width="1" stroke-dasharray="1 1"/><g transform="translate(419,609)"><rect x="0" y="0" width="16" height="16" fill="#89b424"/><path d="M1.8 8.4 C2.6 7.2 4.2 7.3 4.9 8.7 L5.5 10.0 C7.9 6.3 10.9 3.0 14.7 0.9 L15.0 1.5 C11.6 4.4 8.8 8.3 6.1 14.0 L4.8 14.2 C4.0 12.0 2.9 10.0 1.8 8.4 Z" fill="#fff"/></g><path d="M408 635.5 H415" stroke="#444" stroke-width="1" stroke-dasharray="1 1"/><g transform="translate(419,627)"><rect x="0" y="0" width="16" height="16" fill="#89b424"/><path d="M1.8 8.4 C2.6 7.2 4.2 7.3 4.9 8.7 L5.5 10.0 C7.9 6.3 10.9 3.0 14.7 0.9 L15.0 1.5 C11.6 4.4 8.8 8.3 6.1 14.0 L4.8 14.2 C4.0 12.0 2.9 10.0 1.8 8.4 Z" fill="#fff"/></g><path d="M408 653.5 H415" stroke="#444" stroke-width="1" stroke-dasharray="1 1"/><g transform="translate(419,645)"><rect x="0" y="0" width="16" height="16" fill="#89b424"/><path d="M1.8 8.4 C2.6 7.2 4.2 7.3 4.9 8.7 L5.5 10.0 C7.9 6.3 10.9 3.0 14.7 0.9 L15.0 1.5 C11.6 4.4 8.8 8.3 6.1 14.0 L4.8 14.2 C4.0 12.0 2.9 10.0 1.8 8.4 Z" fill="#fff"/></g><g transform="translate(399,663)"><rect x="0" y="0" width="16" height="16" fill="#89b424"/><path d="M1.8 8.4 C2.6 7.2 4.2 7.3 4.9 8.7 L5.5 10.0 C7.9 6.3 10.9 3.0 14.7 0.9 L15.0 1.5 C11.6 4.4 8.8 8.3 6.1 14.0 L4.8 14.2 C4.0 12.0 2.9 10.0 1.8 8.4 Z" fill="#fff"/></g><g transform="translate(555,88)"><rect x="0" y="0" width="359" height="6" fill="url(#pdh)"/></g><g transform="translate(951,88)"><rect x="0" y="0" width="361" height="6" fill="url(#pdh)"/></g><rect x="1319.5" y="88.5" width="5" height="4" fill="none" stroke="#000" stroke-width="1.2"/><rect x="1317.5" y="91.5" width="5" height="4" fill="#f0f0f0" stroke="#000" stroke-width="1.2"/><path d="M1332.5 88.5 L1339.5 95.5 M1339.5 88.5 L1332.5 95.5" stroke="#000" stroke-width="1.5"/><path d="M770.0 134.5 L779.0 134.5 L774.5 139.0 Z" fill="#000"/><path d="M1216 133 L1223 140 M1223 133 L1216 140" stroke="#000" stroke-width="2.6"/><rect x="674.5" y="230.5" width="566.0" height="415.0" fill="#fff"/><path d="M674.5 633.50 H748" stroke="#0000ff" stroke-width="1.15"/><path d="M753 620.50 H1142" stroke="#008000" stroke-width="1.15"/><path d="M753 608.50 H1142" stroke="#ff0000" stroke-width="1.15"/><path d="M753 595.50 H1142" stroke="#00bfbf" stroke-width="1.15"/><path d="M753 583.50 H1142" stroke="#bf00bf" stroke-width="1.15"/><path d="M753 570.50 H1142" stroke="#bfbf00" stroke-width="1.15"/><path d="M753 557.50 H1142" stroke="#000000" stroke-width="1.15"/><path d="M753 545.50 H1142" stroke="#0000ff" stroke-width="1.15"/><path d="M753 532.50 H1155" stroke="#008000" stroke-width="1.15"/><path d="M753 520.50 H1155" stroke="#ff0000" stroke-width="1.15"/><path d="M753 507.50 H1155" stroke="#00bfbf" stroke-width="1.15"/><path d="M753 494.50 H1155" stroke="#bf00bf" stroke-width="1.15"/><path d="M753 482.50 H1155" stroke="#bfbf00" stroke-width="1.15"/><path d="M766 469.50 H1162" stroke="#000000" stroke-width="1.15"/><path d="M766 457.50 H1162" stroke="#0000ff" stroke-width="1.15"/><path d="M766 444.50 H1162" stroke="#008000" stroke-width="1.15"/><path d="M766 432.50 H1162" stroke="#ff0000" stroke-width="1.15"/><path d="M766 419.50 H1162" stroke="#00bfbf" stroke-width="1.15"/><path d="M766 406.50 H1162" stroke="#bf00bf" stroke-width="1.15"/><path d="M766 394.50 H1162" stroke="#bfbf00" stroke-width="1.15"/><path d="M766 381.50 H1162" stroke="#000000" stroke-width="1.15"/><path d="M766 369.50 H1162" stroke="#0000ff" stroke-width="1.15"/><path d="M766 356.50 H1162" stroke="#008000" stroke-width="1.15"/><path d="M766 344.50 H1162" stroke="#ff0000" stroke-width="1.15"/><path d="M773 331.50 H1162" stroke="#00bfbf" stroke-width="1.15"/><path d="M773 318.50 H1162" stroke="#bf00bf" stroke-width="1.15"/><path d="M773 306.50 H1162" stroke="#bfbf00" stroke-width="1.15"/><path d="M773 293.50 H1162" stroke="#000000" stroke-width="1.15"/><path d="M773 281.50 H1162" stroke="#0000ff" stroke-width="1.15"/><path d="M773 268.50 H1162" stroke="#008000" stroke-width="1.15"/><path d="M773 255.50 H1162" stroke="#ff0000" stroke-width="1.15"/><path d="M1174 243.50 H1240.5" stroke="#00bfbf" stroke-width="1.15"/><rect x="674.5" y="230.5" width="566.0" height="415.0" fill="none" stroke="#000" stroke-width="1.4"/><path d="M701.5 645.5 V641.5 M701.5 230.5 V234.5" stroke="#000" stroke-width="0.8"/><path d="M766.5 645.5 V641.5 M766.5 230.5 V234.5" stroke="#000" stroke-width="0.8"/><path d="M832.5 645.5 V641.5 M832.5 230.5 V234.5" stroke="#000" stroke-width="0.8"/><path d="M898.5 645.5 V641.5 M898.5 230.5 V234.5" stroke="#000" stroke-width="0.8"/><path d="M964.5 645.5 V641.5 M964.5 230.5 V234.5" stroke="#000" stroke-width="0.8"/><path d="M1029.5 645.5 V641.5 M1029.5 230.5 V234.5" stroke="#000" stroke-width="0.8"/><path d="M1095.5 645.5 V641.5 M1095.5 230.5 V234.5" stroke="#000" stroke-width="0.8"/><path d="M1161.5 645.5 V641.5 M1161.5 230.5 V234.5" stroke="#000" stroke-width="0.8"/><path d="M1227.5 645.5 V641.5 M1227.5 230.5 V234.5" stroke="#000" stroke-width="0.8"/><path d="M674.5 645.5 H678.5 M1240.5 645.5 H1236.5" stroke="#000" stroke-width="0.8"/><text x="669" y="649.5" text-anchor="end" font-size="14" class="pt">0</text><path d="M674.5 583.5 H678.5 M1240.5 583.5 H1236.5" stroke="#000" stroke-width="0.8"/><text x="669" y="587.5" text-anchor="end" font-size="14" class="pt">5</text><path d="M674.5 520.5 H678.5 M1240.5 520.5 H1236.5" stroke="#000" stroke-width="0.8"/><text x="669" y="524.5" text-anchor="end" font-size="14" class="pt">10</text><path d="M674.5 457.5 H678.5 M1240.5 457.5 H1236.5" stroke="#000" stroke-width="0.8"/><text x="669" y="461.5" text-anchor="end" font-size="14" class="pt">15</text><path d="M674.5 394.5 H678.5 M1240.5 394.5 H1236.5" stroke="#000" stroke-width="0.8"/><text x="669" y="398.5" text-anchor="end" font-size="14" class="pt">20</text><path d="M674.5 331.5 H678.5 M1240.5 331.5 H1236.5" stroke="#000" stroke-width="0.8"/><text x="669" y="335.5" text-anchor="end" font-size="14" class="pt">25</text><path d="M674.5 268.5 H678.5 M1240.5 268.5 H1236.5" stroke="#000" stroke-width="0.8"/><text x="669" y="272.5" text-anchor="end" font-size="14" class="pt">30</text><text transform="translate(699.3,650.6) rotate(-80)" text-anchor="end" font-size="14" letter-spacing="0.33" class="pt">17:35:59 UTC</text><text transform="translate(764.3,650.6) rotate(-80)" text-anchor="end" font-size="14" letter-spacing="0.33" class="pt">17:36:09 UTC</text><text transform="translate(830.3,650.6) rotate(-80)" text-anchor="end" font-size="14" letter-spacing="0.33" class="pt">17:36:19 UTC</text><text transform="translate(896.3,650.6) rotate(-80)" text-anchor="end" font-size="14" letter-spacing="0.33" class="pt">17:36:29 UTC</text><text transform="translate(962.3,650.6) rotate(-80)" text-anchor="end" font-size="14" letter-spacing="0.33" class="pt">17:36:39 UTC</text><text transform="translate(1027.3,650.6) rotate(-80)" text-anchor="end" font-size="14" letter-spacing="0.33" class="pt">17:36:49 UTC</text><text transform="translate(1093.3,650.6) rotate(-80)" text-anchor="end" font-size="14" letter-spacing="0.33" class="pt">17:36:59 UTC</text><text transform="translate(1159.3,650.6) rotate(-80)" text-anchor="end" font-size="14" letter-spacing="0.33" class="pt">17:37:09 UTC</text><text transform="translate(1225.3,650.6) rotate(-80)" text-anchor="end" font-size="14" letter-spacing="0.33" class="pt">17:37:19 UTC</text><text transform="translate(645.8,438.3) rotate(-90)" text-anchor="middle" font-size="14" class="pt">Jobs</text><text x="956" y="755.6" text-anchor="middle" font-size="14" letter-spacing="0.4" class="pt">Time</text>
</svg>
</body></html>
